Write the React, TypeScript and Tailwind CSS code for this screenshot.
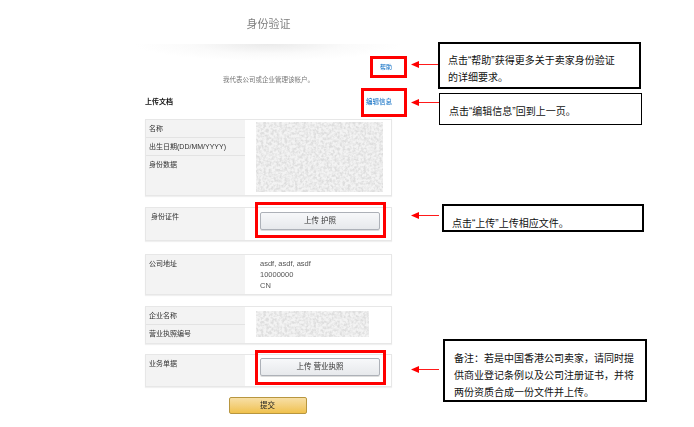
import React from "react";

const font = { fontFamily: '"Liberation Sans", "Noto Sans CJK SC", sans-serif' };

// grainy blurred patch that hides the personal data in the screenshot
const Mosaic = ({ w, h, id }: { w: number; h: number; id: string }) => (
  <svg width={w} height={h} className="block">
    <filter id={id}>
      <feTurbulence type="fractalNoise" baseFrequency="0.38" numOctaves={2} seed={4} />
      <feColorMatrix values="0 0 0 0 0.6  0 0 0 0 0.6  0 0 0 0 0.6  3 0 0 0 -1.1" />
      <feGaussianBlur stdDeviation="0.6" />
    </filter>
    <rect width={w} height={h} fill="#f3f3f3" />
    <rect width={w} height={h} filter={`url(#${id})`} opacity={0.5} />
  </svg>
);

const Arrow = ({ y }: { y: number }) => (
  <svg width="28" height="9" viewBox="0 0 28 9" className="absolute left-[411px]" style={{ top: y - 4 }}>
    <path d="M8 4.5H28" stroke="#ff1a1a" strokeWidth="1" />
    <path d="M0 4.5L8 1V8Z" fill="#f00" />
  </svg>
);

const Upload = ({ label }: { label: string }) => (
  <button className="block w-[120px] h-[18px] rounded-[2px] border border-[#adb1b8] bg-gradient-to-b from-[#f7f8fa] to-[#e7e9ec] text-[7.5px] text-[#333] shadow-[0_1px_0_#ddd]">
    {label}
  </button>
);

export default function App() {
  return (
    <div className="relative w-[694px] h-[427px] bg-white overflow-hidden" style={font}>
      <div className="ml-[145px] w-[247px] blur-[0.35px]">
        <h1 className="pt-[16px] h-[44px] text-center text-[11px] leading-[16px] text-[#808080]">身份验证</h1>
        <div className="h-[17px] -mx-[12px] bg-[radial-gradient(ellipse_at_top,#eaeaea_0%,#fafafa_40%,#ffffff_70%)]" />
        <div className="h-[12px] text-right text-[6px] leading-[12px] text-[#0066c0]">帮助</div>
        <p className="mt-[1px] h-[12px] text-center text-[6.5px] leading-[12px] text-[#777]">我代表公司或企业管理该帐户。</p>
        <div className="mt-[10px] h-[12px] flex items-center justify-between">
          <span className="text-[7px] font-bold text-[#111]">上传文档</span>
          <span className="text-[6.5px] text-[#0066c0]">编辑信息</span>
        </div>

        <div className="mt-[11px] h-[77px] flex border border-[#e7e7e7] shadow-[0_1px_1px_#f0f0f0]">
          <div className="w-[99px] bg-[#f3f3f3] text-[7px] text-[#333]">
            <div className="h-[18px] pl-[3px] leading-[18px] border-b border-[#e3e3e3]">名称</div>
            <div className="h-[18px] pl-[3px] leading-[18px] border-b border-[#e3e3e3]">出生日期(DD/MM/YYYY)</div>
            <div className="pl-[3px] leading-[18px]">身份数据</div>
          </div>
          <div className="pl-[11px] pt-[2px]">
            <Mosaic w={127} h={70} id="m1" />
          </div>
        </div>

        <div className="mt-[11px] h-[34px] flex border border-[#e7e7e7] shadow-[0_1px_1px_#f0f0f0]">
          <div className="w-[99px] bg-[#f3f3f3] pl-[5px] text-[7px] leading-[18px] text-[#333]">身份证件</div>
          <div className="pl-[15px] pt-[4px]">
            <Upload label="上传 护照" />
          </div>
        </div>

        <div className="mt-[13px] h-[41px] flex border border-[#e7e7e7] shadow-[0_1px_1px_#f0f0f0]">
          <div className="w-[99px] bg-[#f3f3f3] pl-[3px] text-[7px] leading-[18px] text-[#333]">公司地址</div>
          <div className="pl-[15px] pt-[3px] text-[7.5px] leading-[11px] text-[#555]">
            <div>asdf, asdf, asdf</div>
            <div>10000000</div>
            <div>CN</div>
          </div>
        </div>

        <div className="mt-[11px] h-[38px] flex border border-[#e7e7e7] shadow-[0_1px_1px_#f0f0f0]">
          <div className="w-[99px] bg-[#f3f3f3] text-[7px] text-[#333]">
            <div className="h-[18px] pl-[3px] leading-[18px] border-b border-[#e3e3e3]">企业名称</div>
            <div className="pl-[3px] leading-[18px]">营业执照编号</div>
          </div>
          <div className="pl-[11px] pt-[4px]">
            <Mosaic w={113} h={26} id="m2" />
          </div>
        </div>

        <div className="mt-[10px] h-[33px] flex border border-[#e7e7e7] shadow-[0_1px_1px_#f0f0f0]">
          <div className="w-[99px] bg-[#f3f3f3] pl-[3px] text-[7px] leading-[18px] text-[#333]">业务单据</div>
          <div className="pl-[15px] pt-[3px]">
            <Upload label="上传 营业执照" />
          </div>
        </div>

        <div className="mt-[10px] flex justify-center pr-[2px]">
          <button className="w-[78px] h-[17px] rounded-[2px] border border-[#b8963f] bg-gradient-to-b from-[#f7dfa5] to-[#f0c14b] text-[7.5px] text-[#222]">
            提交
          </button>
        </div>
      </div>

      {/* red highlight boxes */}
      <div className="absolute left-[370px] top-[56px] w-[37px] h-[22px] border-[3px] border-[#f00]" />
      <div className="absolute left-[361px] top-[88px] w-[46px] h-[29px] border-[3px] border-[#f00]" />
      <div className="absolute left-[255px] top-[202px] w-[131px] h-[36px] border-[3px] border-[#f00]" />
      <div className="absolute left-[255px] top-[350px] w-[131px] h-[35px] border-[3px] border-[#f00]" />

      <Arrow y={64} />
      <Arrow y={102} />
      <Arrow y={215} />
      <Arrow y={369} />

      {/* callouts */}
      <div className="absolute left-[438px] top-[42px] w-[203px] h-[47px] border-2 border-black pl-[8px] pt-[8px] text-[10px] font-normal leading-[17px] text-[#111]">
        点击“帮助”获得更多关于卖家身份验证
        <br />
        的详细要求。
      </div>
      <div className="absolute left-[439px] top-[93px] w-[203px] h-[32px] border border-black pl-[9px] pt-[9px] text-[10px] leading-[17px] text-[#111]">
        点击“编辑信息”回到上一页。
      </div>
      <div className="absolute left-[442px] top-[204px] w-[202px] h-[28px] border-2 border-black pl-[8px] pt-[9px] text-[10px] leading-[17px] text-[#111]">
        点击“上传”上传相应文件。
      </div>
      <div className="absolute left-[443px] top-[339px] w-[204px] h-[63px] border-2 border-black pl-[9px] pt-[9px] text-[10px] leading-[17px] text-[#111]">
        备注：若是中国香港公司卖家，请同时提
        <br />
        供商业登记条例以及公司注册证书，并将
        <br />
        两份资质合成一份文件并上传。
      </div>
    </div>
  );
}
